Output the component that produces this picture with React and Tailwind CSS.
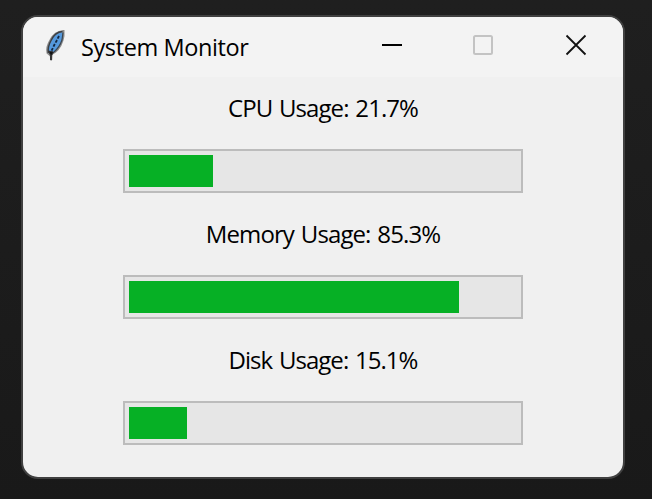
const meters = [
  { label: 'CPU Usage: 21.7%', fill: 84, text: 'tracking-[-0.93px]' },
  { label: 'Memory Usage: 85.3%', fill: 330, text: 'tracking-[-0.9px]' },
  { label: 'Disk Usage: 15.1%', fill: 58, text: 'tracking-[-0.97px]' },
];

function Feather() {
  return (
    <svg width="22" height="34" viewBox="0 0 22 34" className="shrink-0">
      <path d="M18.5 2C13 2.5 8 6 5.5 11C2.5 16 1.5 20 2.5 24L5 26L10 23C15 19 17.5 13 18.5 7Z" fill="#5599dd" stroke="#8c8c8c" strokeWidth="2" />
      <path d="M17.5 2.5C12 3 8 7 6 11.5C3.5 16 2.8 20 3.3 24" fill="none" stroke="#3b3f44" strokeWidth="1.5" />
      <path d="M14 7L11.5 12L9 16.5L6 23" fill="none" stroke="#142840" strokeWidth="1.8" strokeDasharray="3 1.5" />
      <path d="M18 3.5L17 11C15 17 12.5 20 9 23" fill="none" stroke="#3a4652" strokeWidth="1.2" />
      <path d="M3.5 22L8.5 23L6.8 26L6.6 31L5.6 31L5.4 26Z" fill="#111" stroke="#333" strokeWidth="1" />
    </svg>
  );
}

function TitleBar() {
  return (
    <header className="flex h-[60px] items-start bg-[#f3f3f3] pl-[22px]">
      <div className="mt-3"><Feather /></div>
      <h1 className="mt-[14px] ml-3.5 w-[282px] text-[23.5px] leading-8 font-normal whitespace-nowrap tracking-[-0.4px]">System Monitor</h1>
      <svg width="240" height="60" viewBox="0 0 240 60" fill="none" className="shrink-0">
        <path d="M19 28H39" stroke="#000" strokeWidth="2" />
        <rect x="111" y="19" width="18" height="18" rx="1.5" stroke="#c3c3c3" strokeWidth="2" />
        <path d="M203.5 18.5L222.5 37.5M222.5 18.5L203.5 37.5" stroke="#111" strokeWidth="1.8" />
      </svg>
    </header>
  );
}

function Meter({ label, fill, text }) {
  return (
    <section className="flex flex-col items-center">
      <p className={`h-8 text-[24px] leading-8 whitespace-nowrap [word-spacing:1.5px] ${text}`}>{label}</p>
      <div className="mt-[25px] h-11 w-[400px] border-2 border-[#bcbcbc] bg-[#e6e6e6] p-1">
        <div className="h-8 bg-[#06b025]" style={{ width: fill }} />
      </div>
    </section>
  );
}

export default function App() {
  return (
    <main className="h-[499px] w-[652px] overflow-hidden bg-linear-to-b from-[#1f1f1f] to-[#191919] pt-[15px] pl-[21px] font-['Open_Sans','Noto_Sans',sans-serif] text-black">
      <div className="h-[464px] w-[604px] overflow-hidden rounded-[17px] border-2 border-[#404040] bg-[#f0f0f0]">
        <TitleBar />
        <div className="flex flex-col gap-[25px] pt-[15px]">
          {meters.map((m) => <Meter key={m.label} {...m} />)}
        </div>
      </div>
    </main>
  );
}
